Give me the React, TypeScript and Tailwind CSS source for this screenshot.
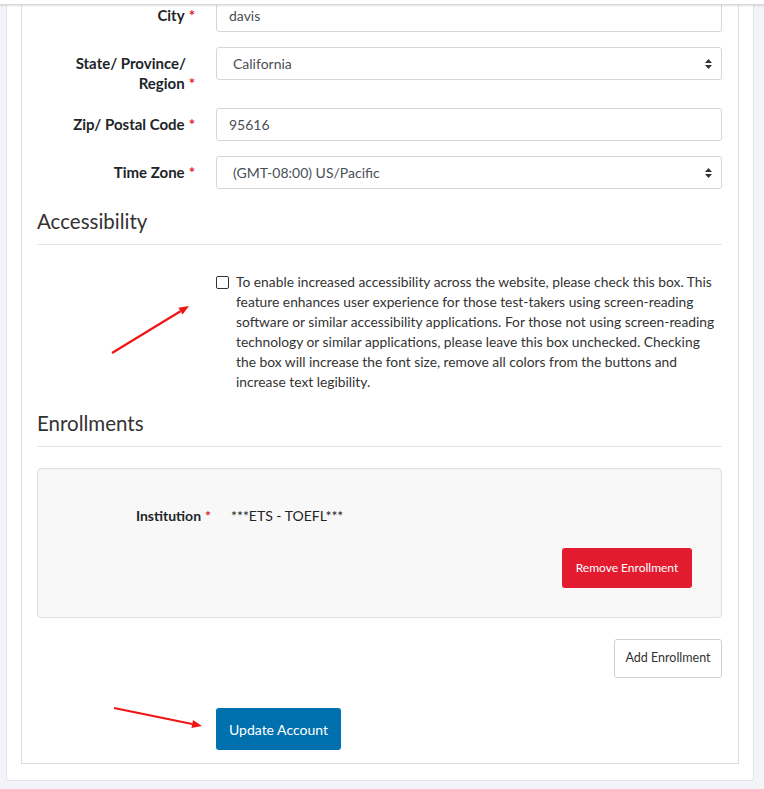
import React from 'react';

const font = { fontFamily: 'Lato, "Noto Sans", sans-serif' };

function Req() {
  return <span className="text-[#e31b2d] ml-[4px] font-bold">*</span>;
}

function SelectArrows() {
  return (
    <svg width="9" height="12" viewBox="0 0 9 12" className="shrink-0">
      <path d="M4.5 1 L8 5 L1 5 Z" fill="#333" />
      <path d="M4.5 11 L8 7 L1 7 Z" fill="#333" />
    </svg>
  );
}

function Row({
  label,
  value,
  select,
}: {
  label: React.ReactNode;
  value: string;
  select?: boolean;
}) {
  return (
    <div className="flex mb-[15px]">
      <label className="w-[179px] shrink-0 pr-[21px] pt-[6px] text-right font-bold text-[15px] leading-[20px] text-[#212529]">
        {label}
        <Req />
      </label>
      <div
        className={`flex-1 h-[33px] border border-[#d6d6d6] rounded-[3px] bg-white flex items-center text-[14px] text-[#495057] ${
          select ? 'pl-[16px] pr-[8px]' : 'pl-[12px] pr-[12px]'
        }`}
      >
        <span className="flex-1">{value}</span>
        {select && <SelectArrows />}
      </div>
    </div>
  );
}

function Heading({ children }: { children: React.ReactNode }) {
  return (
    <div className="border-b border-[#e4e4e4] pb-[10px]">
      <h4 className="text-[20.5px] leading-[26px] text-[#333]">{children}</h4>
    </div>
  );
}

function RedArrow({ x1, y1, x2, y2 }: { x1: number; y1: number; x2: number; y2: number }) {
  const ang = Math.atan2(y2 - y1, x2 - x1);
  const len = 10;
  const w = 4;
  const bx = x2 - len * Math.cos(ang);
  const by = y2 - len * Math.sin(ang);
  const px = -Math.sin(ang) * w;
  const py = Math.cos(ang) * w;
  return (
    <svg className="absolute left-0 top-0 pointer-events-none" width="764" height="789">
      <line x1={x1} y1={y1} x2={bx} y2={by} stroke="#f01414" strokeWidth="2.2" />
      <path d={`M${x2} ${y2} L${bx + px} ${by + py} L${bx - px} ${by - py} Z`} fill="#f01414" />
    </svg>
  );
}

const accessibilityLines = [
  'To enable increased accessibility across the website, please check this box. This',
  'feature enhances user experience for those test-takers using screen-reading',
  'software or similar accessibility applications. For those not using screen-reading',
  'technology or similar applications, please leave this box unchecked. Checking',
  'the box will increase the font size, remove all colors from the buttons and',
  'increase text legibility.',
];

export default function App() {
  return (
    <div className="relative w-[764px] h-[789px] overflow-hidden bg-[#f3f4f8]" style={font}>
      <div className="absolute left-0 top-0 w-full h-[5px] bg-white border-b border-[#d9d9d9] shadow-[0_1px_2px_rgba(0,0,0,0.12)] z-10" />

      <div className="ml-[6px] w-[748px] h-[782px] bg-white border border-t-0 border-[#e3e4ea] rounded-b-[3px] px-[14px]">
        <div className="h-[765px] border border-t-0 border-[#dcdcdc] pl-[15px] pr-[16px]">
          <div className="-mt-[1px]">
            <Row label="City" value="davis" />
            <div className="flex mb-[15px]">
              <label className="w-[179px] shrink-0 pr-[21px] pt-[6px] text-right font-bold text-[15px] leading-[20px] text-[#212529]">
                State/ Province/<span className="inline-block w-[9px]" />
                <br />
                Region
                <Req />
              </label>
              <div className="flex-1 h-[33px] border border-[#d6d6d6] rounded-[3px] bg-white flex items-center text-[14px] text-[#495057] pl-[16px] pr-[8px]">
                <span className="flex-1">California</span>
                <SelectArrows />
              </div>
            </div>
            <Row label="Zip/ Postal Code" value="95616" />
            <Row label="Time Zone" value="(GMT-08:00) US/Pacific" select />
          </div>

          <div className="mt-[19px]">
            <Heading>Accessibility</Heading>
          </div>

          <div className="flex mt-[27px] pl-[179px]">
            <div className="w-[13px] h-[13px] border border-[#333] rounded-[2px] mt-[4px] shrink-0 bg-white" />
            <p className="ml-[7px] text-[13.8px] leading-[20px] text-[#333]">
              {accessibilityLines.map((line) => (
                <span key={line} className="block whitespace-nowrap">
                  {line}
                </span>
              ))}
            </p>
          </div>

          <div className="mt-[18px]">
            <Heading>Enrollments</Heading>
          </div>

          <div className="mt-[21px] h-[150px] bg-[#f8f8f8] border border-[#e0e0e0] rounded-[4px] shadow-[inset_0_1px_2px_rgba(0,0,0,0.04)] pt-[37px] pr-[29px] flex flex-col">
            <div className="flex text-[14px] leading-[20px]">
              <div className="w-[173px] text-right font-bold text-[#212529]">
                Institution
                <Req />
              </div>
              <div className="ml-[20px] text-[#212529]">***ETS - TOEFL***</div>
            </div>
            <div className="flex justify-end mt-[22px]">
              <button className="w-[130px] h-[40px] bg-[#e21b2f] text-white text-[12px] rounded-[3px]">
                Remove Enrollment
              </button>
            </div>
          </div>

          <div className="flex justify-end mt-[21px]">
            <button className="w-[108px] h-[39px] bg-white border border-[#cfcfcf] rounded-[3px] text-[12.5px] text-[#333]">
              Add Enrollment
            </button>
          </div>

          <div className="mt-[30px] pl-[179px]">
            <button className="w-[125px] h-[42px] bg-[#0071ae] text-white text-[14px] rounded-[3px]">
              Update Account
            </button>
          </div>
        </div>
      </div>

      <RedArrow x1={112} y1={353} x2={189} y2={306} />
      <RedArrow x1={114} y1={708} x2={202} y2={726} />
    </div>
  );
}
